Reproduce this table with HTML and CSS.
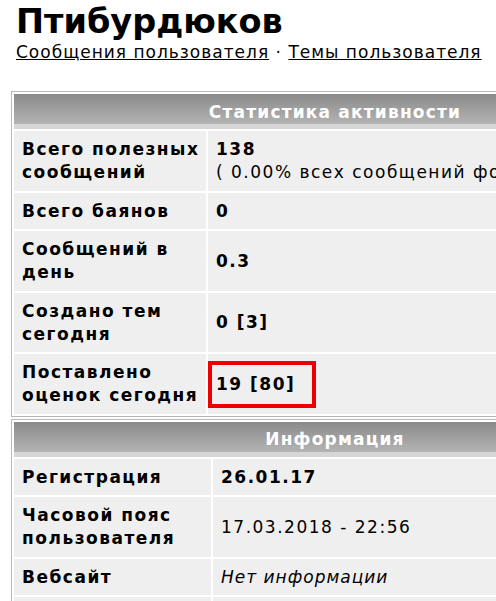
FILE: index.html
```html
<!DOCTYPE html>
<html lang="ru">
<head>
<meta charset="utf-8">
<title>Птибурдюков</title>
<link rel="stylesheet" href="styles.css">
</head>
<body>
<div class="page">
  <div class="head">
    <h1 class="name">Птибурдюков</h1>
    <div class="links"><a href="#">Сообщения пользователя</a> · <a href="#">Темы пользователя</a></div>
  </div>
  <table class="box">
    <tr><th colspan="2" class="cap">Статистика активности</th></tr>
    <tr><td class="lbl">Всего полезных сообщений</td><td class="val"><b>138</b><br>( 0.00% всех сообщений форума )</td></tr>
    <tr><td class="lbl">Всего баянов</td><td class="val"><b>0</b></td></tr>
    <tr><td class="lbl">Сообщений в день</td><td class="val"><b>0.3</b></td></tr>
    <tr><td class="lbl">Создано тем сегодня</td><td class="val"><b>0 [3]</b></td></tr>
    <tr><td class="lbl">Поставлено оценок сегодня</td><td class="val mark-cell"><b>19 [80]</b><span class="mark"></span></td></tr>
  </table>
  <table class="box box2">
    <tr><th colspan="2" class="cap">Информация</th></tr>
    <tr><td class="lbl lbl2">Регистрация</td><td class="val"><b>26.01.17</b></td></tr>
    <tr><td class="lbl lbl2">Часовой пояс пользователя</td><td class="val">17.03.2018 - 22:56</td></tr>
    <tr><td class="lbl lbl2">Вебсайт</td><td class="val"><i class="none">Нет информации</i></td></tr>
    <tr><td class="lbl lbl2">&nbsp;</td><td class="val">&nbsp;</td></tr>
  </table>
</div>
</body>
</html>
```
FILE: styles.css
```css
html, body {
  margin: 0;
  padding: 0;
  background: #fff;
  overflow: hidden;
}
body {
  font-family: "DejaVu Sans", Verdana, sans-serif;
  color: #000;
}
.page {
  padding: 0 0 0 11px;
  width: 700px;
}
.head {
  padding: 3px 0 0 5px;
}
.name {
  margin: 0;
  font-size: 33.5px;
  font-weight: bold;
  line-height: 38px;
}
.links {
  font-size: 17px;
  line-height: 22px;
  letter-spacing: 1px;
}
.links a {
  color: #000;
  text-decoration: underline;
}
.box {
  margin-top: 28px;
  width: 648px;
  border: 1px solid #b8b8b8;
  border-collapse: separate;
  border-spacing: 2px;
  background: #fff;
  font-size: 17px;
  letter-spacing: 1.5px;
}
.box2 {
  margin-top: 2px;
}
.cap {
  height: 35px;
  padding: 0;
  background: linear-gradient(#8a8a8a, #b4b4b4 86%, #d6d6d6 86%);
  color: #fff;
  font-weight: bold;
  font-size: 17px;
  letter-spacing: 1.2px;
  text-align: center;
}
.lbl, .val {
  background: #efefef;
  padding: 7px 8px 6.5px;
  line-height: 23px;
  vertical-align: middle;
  text-align: left;
}
.lbl {
  width: 184px;
  padding-right: 0;
  font-weight: bold;
}
.lbl2 {
  width: 189px;
}
.none {
  letter-spacing: 1px;
}
.mark-cell {
  position: relative;
}
.mark {
  position: absolute;
  left: 0;
  top: 7px;
  width: 100px;
  height: 39px;
  border: 4px solid #ee0000;
}
```
